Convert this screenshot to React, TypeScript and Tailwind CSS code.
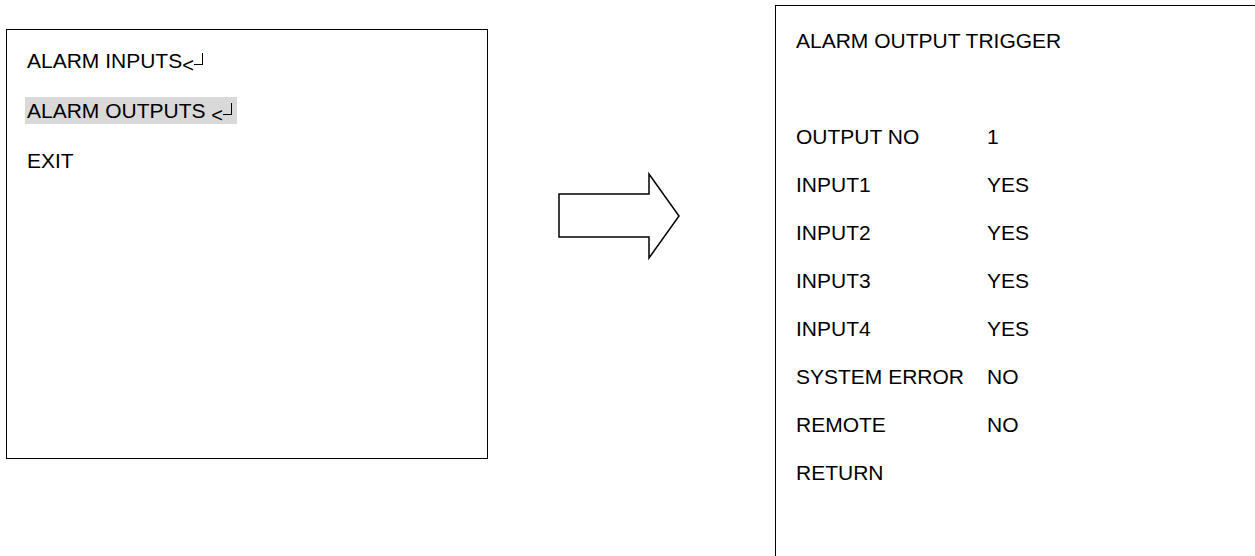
import React from "react";

type row = {
  label: string;
  value?: string;
};

const triggerRows: row[] = [
  { label: "OUTPUT NO", value: "1" },
  { label: "INPUT1", value: "YES" },
  { label: "INPUT2", value: "YES" },
  { label: "INPUT3", value: "YES" },
  { label: "INPUT4", value: "YES" },
  { label: "SYSTEM ERROR", value: "NO" },
  { label: "REMOTE", value: "NO" },
  { label: "RETURN" },
];

// the "<┘" enter mark after a menu entry
const EnterMark = () => {
  return (
    <span className="relative inline-block w-[21px] h-[17px] align-[-2px]">
      <span className="absolute left-0 top-[2px] text-[20px] leading-[20px]">
        &lt;
      </span>
      <span className="absolute right-0 top-0 w-[9px] h-[12px] border-r border-b border-black" />
    </span>
  );
};

const ArrowShape = () => {
  return (
    <svg
      width="124"
      height="88"
      viewBox="0 0 124 88"
      className="shrink-0 ml-[69px] mt-[167px]"
    >
      <polygon
        points="2,22 92,22 92,2 122,44 92,86 92,65 2,65"
        fill="white"
        stroke="black"
        strokeWidth="1.5"
        strokeLinejoin="miter"
      />
    </svg>
  );
};

export default function App() {
  return (
    <div className="w-full h-screen overflow-hidden bg-white font-['Liberation_Sans',Arial,sans-serif] text-[21px] text-black">
      <div className="flex items-start pt-[5px] pl-[6px]">
        {/* main menu */}
        <div className="shrink-0 w-[482px] h-[430px] mt-[24px] border border-black pt-[6px] pl-[18px]">
          <div className="h-[50px] leading-[49px] px-[2px]">
            ALARM INPUTS
            <EnterMark />
          </div>
          <div className="h-[50px] leading-[49px]">
            <span className="inline-block leading-[27px] bg-[#d9d9d9] pl-[2px] pr-[5px]">
              ALARM OUTPUTS <EnterMark />
            </span>
          </div>
          <div className="h-[50px] leading-[49px] px-[2px]">EXIT</div>
        </div>

        <ArrowShape />

        {/* trigger sub menu */}
        <div className="shrink-0 w-[500px] h-[620px] ml-[94px] border border-black pt-[11px] pl-[20px]">
          <div className="h-[48px] leading-[48px]">ALARM OUTPUT TRIGGER</div>
          <div className="h-[48px]" />
          {triggerRows.map((r) => (
            <div
              key={r.label}
              className="grid grid-cols-[191px_1fr] h-[48px] leading-[48px]"
            >
              <div>{r.label}</div>
              <div>{r.value}</div>
            </div>
          ))}
        </div>
      </div>
    </div>
  );
}
